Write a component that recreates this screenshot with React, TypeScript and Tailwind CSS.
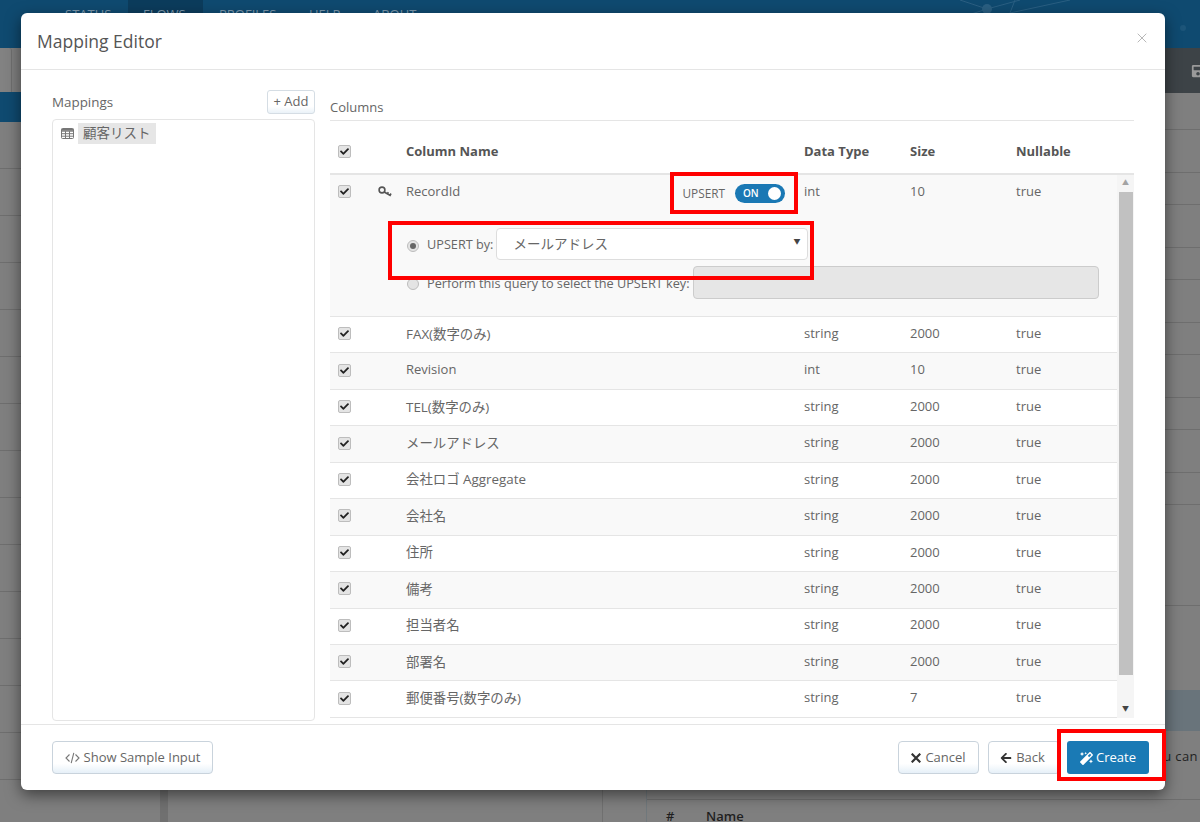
import React from "react";
import { FaCheck, FaArrowLeft, FaMagic, FaSave } from "react-icons/fa";

const FONT = "[font-family:'Open_Sans','Noto_Sans_CJK_JP',sans-serif]";

const rows: [string, string, string][] = [
  ["FAX(数字のみ)", "string", "2000"],
  ["Revision", "int", "10"],
  ["TEL(数字のみ)", "string", "2000"],
  ["メールアドレス", "string", "2000"],
  ["会社ロゴ Aggregate", "string", "2000"],
  ["会社名", "string", "2000"],
  ["住所", "string", "2000"],
  ["備考", "string", "2000"],
  ["担当者名", "string", "2000"],
  ["部署名", "string", "2000"],
  ["郵便番号(数字のみ)", "string", "7"],
];

function Check() {
  return (
    <span className="flex h-[13px] w-[13px] items-center justify-center rounded-[2px] border border-[#bdbdbd] bg-[#e4e4e4]">
      <FaCheck className="h-[9px] w-[9px] text-[#222]" />
    </span>
  );
}

function Key() {
  return (
    <svg viewBox="0 0 14 11" className="block h-[11px] w-[14px] text-[#555]" fill="none" stroke="currentColor" strokeWidth="1.6">
      <circle cx="4" cy="4" r="2.9" />
      <path d="M6.2 6 L12.8 9.8 M9.2 7.8 L10.4 6.2 M11.6 9.2 L13.2 7.6" />
    </svg>
  );
}

function TableIcon() {
  return (
    <svg viewBox="0 0 13 11" className="h-[11px] w-[13px] text-[#777]" fill="none" stroke="currentColor" strokeWidth="1">
      <rect x="0.5" y="0.5" width="12" height="10" rx="1" />
      <path d="M0.5 3.2 H12.5 M0.5 5.7 H12.5 M0.5 8.2 H12.5 M4.5 3.2 V10.5 M8.5 3.2 V10.5" />
      <path d="M0.5 1.8 H12.5" strokeWidth="2" />
    </svg>
  );
}

function Cross({ className }: { className: string }) {
  return (
    <svg viewBox="0 0 10 10" className={className} fill="none" stroke="currentColor">
      <path d="M0.7 0.7 L9.3 9.3 M9.3 0.7 L0.7 9.3" />
    </svg>
  );
}

function CodeIcon() {
  return (
    <svg viewBox="0 0 15 12" className="mr-[4px] h-[12px] w-[15px] text-[#777]" fill="none" stroke="currentColor" strokeWidth="1.1">
      <path d="M4.5 2.5 L1 6 L4.5 9.5 M10.5 2.5 L14 6 L10.5 9.5 M8.8 0.8 L6.2 11.2" />
    </svg>
  );
}

function Radio({ on }: { on?: boolean }) {
  return (
    <span className="mt-[3px] flex h-[12px] w-[12px] shrink-0 items-center justify-center rounded-full border border-[#bdbdbd] bg-[#e4e4e4]">
      {on && <span className="h-[6px] w-[6px] rounded-full bg-[#666]" />}
    </span>
  );
}

const GRID = "grid grid-cols-[76px_398px_106px_106px_1fr] items-center";
const BTN =
  "flex h-[33px] items-center justify-center rounded-[4px] border border-[#c9d3dc] bg-gradient-to-b from-white from-70% to-[#e6f0f8] pt-[1px] text-[13px] text-[#666]";
const LINE = "shrink-0 border-b border-[#6e6e6e]";

function Backdrop() {
  const lefts = Array.from({ length: 14 }, (_, i) => i);
  const rights = Array.from({ length: 11 }, (_, i) => i);
  return (
    <div className="flex h-full w-full flex-col bg-[#7f7f7f]">
      <div className="flex h-[48px] shrink-0 items-start bg-[#0f4a70] text-[13px] text-[#7d99ad]">
        <div className="flex pl-[65px] pt-[3px]">
          <span className="w-[63px] pt-[2px]">STATUS</span>
          <span className="-mt-[3px] h-[48px] w-[75px] bg-[#0c3c5c] pl-[15px] pt-[5px]">FLOWS</span>
          <span className="ml-[16px] w-[90px] pt-[2px]">PROFILES</span>
          <span className="w-[64px] pt-[2px]">HELP</span>
          <span className="pt-[2px]">ABOUT</span>
        </div>
      </div>
      <div className="flex min-h-0 flex-1">
        <div className="w-[160px] shrink-0">
          <div className="h-[44px] w-[12px] rounded-tr-[3px] border-r border-[#6f6f6f] bg-[#828282]" />
          <div className="h-[30px] bg-[#0f4a70]" />
          {lefts.map((i) => (
            <div key={i} className="h-[47px] border-b border-[#6e6e6e]" />
          ))}
        </div>
        <div className="w-[8px] shrink-0 bg-[#707070]" />
        <div className="w-[435px] shrink-0 border-r border-[#707070]" />
        <div className="w-[43px] shrink-0" />
        <div className="flex min-w-0 flex-1 flex-col border-l border-[#70787c]">
          <div className="flex h-[45px] shrink-0 items-center justify-end overflow-hidden bg-[#3d4347]">
            <FaSave className="-mr-[7px] h-[14px] w-[18px] text-[#9a9a9a]" />
          </div>
          {rights.map((i) => (
            <div
              key={i}
              className={i === 0 ? LINE + " h-[37px]" : i % 2 === 1 ? LINE + " h-[43px]" : LINE + " h-[32px]"}
            />
          ))}
          <div className={LINE + " h-[101px]"} />
          <div className="h-[84px] shrink-0" />
          <div className="h-[41px] shrink-0 bg-[#69747b]" />
          <div className={LINE + " flex h-[69px] items-center justify-end pr-[2px] text-[13px] text-[#222]"}>
            <span className="mb-[16px] tracking-[0.4px]">u can</span>
          </div>
          <div className="flex items-center pl-[19px] pt-[7px] text-[13px] font-semibold text-[#1f1f1f]">
            <span className="w-[40px]">#</span>
            <span>Name</span>
          </div>
        </div>
      </div>
    </div>
  );
}

function RedBox({ className }: { className: string }) {
  return <div className={"pointer-events-none absolute border-[4px] border-[#ff0000] " + className} />;
}

export default function App() {
  return (
    <div className={"relative h-[822px] w-[1200px] overflow-hidden text-[13px] text-[#666] " + FONT}>
      <Backdrop />

      <svg className="absolute left-[940px] top-0 h-[48px] w-[260px]" viewBox="0 0 260 48" fill="none" stroke="#2a5f82" strokeWidth="1">
        <path d="M47 9 L80 0 M47 9 L20 0 M47 9 L0 24 M75 0 L70 13 M130 0 L70 13" />
        <circle cx="47" cy="9" r="5" fill="#2a5f82" stroke="none" />
        <circle cx="243" cy="28" r="3" fill="#1d5579" stroke="none" />
      </svg>

      {/* modal */}
      <div className="absolute left-[21px] top-[13px] flex h-[777px] w-[1144px] flex-col rounded-[6px] bg-white shadow-[0_5px_15px_rgba(0,0,0,0.5)]">
        <div className="flex h-[57px] shrink-0 items-center justify-between border-b border-[#e5e5e5] pl-[16px] pr-[18px]">
          <h1 className="text-[17.5px] font-normal text-[#555]">Mapping Editor</h1>
          <Cross className="mb-[6px] h-[10px] w-[10px] text-[#b8b8b8]" />
        </div>

        <div className="flex min-h-0 flex-1 border-b border-[#e5e5e5] pl-[31px] pr-[31px]">
          {/* mappings */}
          <div className="flex w-[263px] shrink-0 flex-col pt-[20px]">
            <div className="flex h-[24px] items-center justify-between">
              <span className="mt-[1px] text-[13.4px]">Mappings</span>
              <span className="flex h-[24px] w-[48px] items-center justify-center rounded-[3px] border border-[#d5dde4] bg-gradient-to-b from-white from-70% to-[#eaf2f8]">
                + Add
              </span>
            </div>
            <div className="mt-[5px] h-[602px] rounded-[4px] border border-[#e5e5e5] px-[8px] py-[3px]">
              <div className="flex items-center">
                <TableIcon />
                <span className="ml-[4px] flex h-[21px] items-center bg-[#e6e6e6] px-[5px] text-[13.5px]">顧客リスト</span>
              </div>
            </div>
          </div>

          {/* columns */}
          <div className="ml-[15px] flex min-w-0 flex-1 flex-col pt-[29px]">
            <div className="h-[22px] shrink-0 border-b border-[#e5e5e5] leading-[16px]">Columns</div>
            <div className={GRID + " h-[54px] shrink-0 border-b-2 border-[#e5e5e5] pt-[9px] font-bold text-[#555]"}>
              <div className="pl-[8px]">
                <Check />
              </div>
              <span>Column Name</span>
              <span>Data Type</span>
              <span>Size</span>
              <span>Nullable</span>
            </div>

            <div className="relative min-h-0 flex-1">
              <div className="mr-[17px]">
                <div className="h-[142px] border-b border-[#e5e5e5] bg-[#f9f9f9]">
                  <div className={GRID + " h-[35px] pb-[2px]"}>
                    <div className="flex items-center pl-[8px]">
                      <Check />
                      <span className="ml-[27px]">
                        <Key />
                      </span>
                    </div>
                    <div className="flex items-center justify-between">
                      <span>RecordId</span>
                      <div className="mr-[19px] mt-[4px] flex items-center">
                        <span className="text-[11.8px]">UPSERT</span>
                        <span className="relative ml-[10px] flex h-[19px] w-[50px] items-center rounded-full bg-[#1a78b4] pl-[8px] text-[10px] font-semibold text-white">
                          ON
                          <span className="absolute right-[4px] top-[3px] h-[13px] w-[13px] rounded-full bg-white" />
                        </span>
                      </div>
                    </div>
                    <span>int</span>
                    <span>10</span>
                    <span>true</span>
                  </div>
                  <div className="flex items-center pl-[77px] pt-[18px]">
                    <Radio on />
                    <span className="ml-[8px] pt-[2px] text-[12.7px]">UPSERT by:</span>
                    <div className="ml-[3px] flex h-[32px] w-[312px] items-center justify-between rounded-[4px] border border-[#ddd] bg-white pl-[16px] pr-[7px] text-[13.5px]">
                      <span className="pt-[1px]">メールアドレス</span>
                      <span className="mb-[4px] text-[7px] text-[#444]">▼</span>
                    </div>
                  </div>
                  <div className="mt-[6px] flex items-center pl-[77px]">
                    <Radio />
                    <span className="ml-[8px] pt-[2px] text-[12.7px]">Perform this query to select the UPSERT key:</span>
                    <div className="ml-[4px] h-[33px] w-[406px] rounded-[4px] border border-[#ccc] bg-[#e6e6e6]" />
                  </div>
                </div>
                {rows.map(([name, type, size], i) => (
                  <div
                    key={name}
                    className={
                      GRID +
                      (i % 2 === 0
                        ? " h-[36.45px] border-b border-[#e5e5e5] bg-white pb-[2px]"
                        : " h-[36.45px] border-b border-[#e5e5e5] bg-[#f9f9f9] pb-[2px]")
                    }
                  >
                    <div className="pl-[8px]">
                      <Check />
                    </div>
                    <span className={/[^\x00-\x7f]/.test(name) ? "text-[13.4px]" : "text-[13px]"}>{name}</span>
                    <span>{type}</span>
                    <span>{size}</span>
                    <span>true</span>
                  </div>
                ))}
              </div>
              {/* scrollbar */}
              <div className="absolute bottom-[6px] right-0 top-0 flex w-[17px] flex-col items-center bg-[#f5f5f5]">
                <span className="flex h-[17px] items-center text-[7px] text-[#a3a3a3]">▲</span>
                <div className="h-[483px] w-[14px] bg-[#c1c1c1]" />
                <div className="flex-1" />
                <span className="flex h-[17px] items-center text-[7px] text-[#444]">▼</span>
              </div>
            </div>
          </div>
        </div>

        <div className="flex h-[65px] shrink-0 items-start justify-between pl-[31px] pr-[16px] pt-[16px]">
          <div className={BTN + " w-[161px]"}>
            <CodeIcon />
            Show Sample Input
          </div>
          <div className="flex">
            <div className={BTN + " w-[81px]"}>
              <Cross className="mr-[4px] h-[10px] w-[10px] text-[#333] [stroke-width:2.2]" />
              Cancel
            </div>
            <div className={BTN + " ml-[9px] w-[72px] pr-[3px]"}>
              <FaArrowLeft className="mr-[4px] h-[12px] w-[12px] text-[#333]" />
              Back
            </div>
            <div className="ml-[7px] flex h-[33px] w-[82px] items-center justify-center rounded-[3px] bg-[#1a7ab5] pt-[1px] text-[13px] text-white">
              <FaMagic className="mr-[3px] h-[13px] w-[13px]" />
              Create
            </div>
          </div>
        </div>
      </div>

      <RedBox className="left-[670px] top-[172px] h-[42px] w-[128px]" />
      <RedBox className="left-[388px] top-[221px] h-[59px] w-[426px]" />
      <RedBox className="left-[1057px] top-[729px] h-[52px] w-[109px]" />
    </div>
  );
}
